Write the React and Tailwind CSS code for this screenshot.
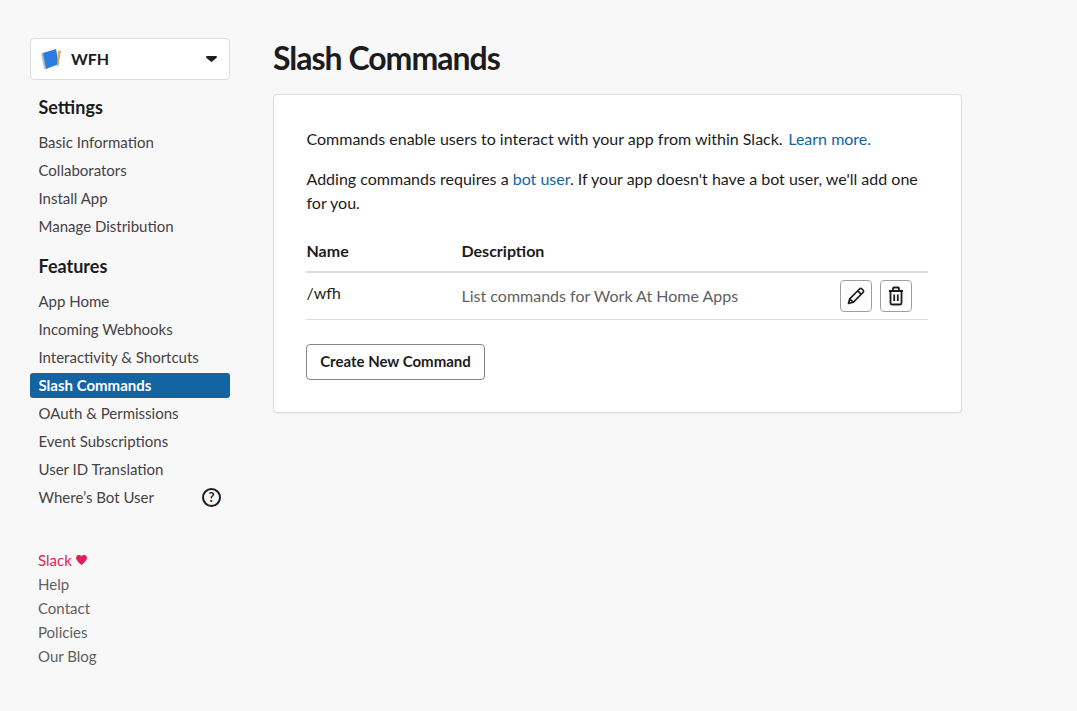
import React from "react";

const settings = ["Basic Information", "Collaborators", "Install App", "Manage Distribution"];
const features = ["App Home", "Incoming Webhooks", "Interactivity & Shortcuts", "Slash Commands", "OAuth & Permissions", "Event Subscriptions", "User ID Translation"];
const footer = ["Help", "Contact", "Policies", "Our Blog"];

function NavItem({ label, active }) {
  return (
    <a className={active ? "block h-[25px] rounded-[3px] bg-[#1264a3] pl-[8.5px] text-[15px] leading-[25px] font-bold text-white" : "block pl-[8.5px] text-[15px] leading-[25px] text-[#454245]"}>
      {label}
    </a>
  );
}

export default function App() {
  return (
    <div className="flex min-h-[711px] bg-[#f8f8f8] font-['Lato','Liberation_Sans',sans-serif] text-[#1d1c1d]">
      <aside className="ml-[30px] w-[200px] pt-[38px]">
        <div className="flex h-[42px] items-center rounded-[4px] border border-[#dddddd] bg-white pl-[9px] pr-[12px]">
          <svg width="23" height="23" viewBox="0 0 23 23" className="shrink-0">
            <path d="M1 5.500l3 15 2 1.500-2-17z" fill="#b9bec4" />
            <path d="M3 5l13-4 3 15-13 5z" fill="#2b7be0" />
            <path d="M18 3l3-.5-2.500 15-1.500 1.500z" fill="#e3ab4c" />
          </svg>
          <span className="ml-[8px] flex-1 text-[16px] font-bold">WFH</span>
          <svg width="11" height="6" viewBox="0 0 11 6" className="shrink-0"><path d="M1 0h9a1 1 0 0 1 .7 1.700L6.200 5.600a1 1 0 0 1-1.400 0L.3 1.700A1 1 0 0 1 1 0z" fill="#1d1c1d" /></svg>
        </div>
        <h2 className="mt-[13px] pl-[8.5px] text-[18px] leading-[28px] font-bold">Settings</h2>
        <nav className="mt-[9px] flex flex-col gap-[3px]">
          {settings.map((s) => <NavItem key={s} label={s} />)}
        </nav>
        <h2 className="mt-[13px] pl-[8.5px] text-[18px] leading-[28px] font-bold">Features</h2>
        <nav className="mt-[9px] flex flex-col gap-[3px]">
          {features.map((s) => <NavItem key={s} label={s} active={s === "Slash Commands"} />)}
          <div className="flex items-center justify-between pr-[9px]">
            <NavItem label="Where’s Bot User" />
            <span className="flex h-[19px] w-[19px] items-center justify-center rounded-full border-2 border-[#1d1c1d] text-[13px] font-bold">?</span>
          </div>
        </nav>
        <div className="mt-[38px] pl-[8px] text-[15px] leading-[24px] text-[#616061]">
          <div className="flex items-center gap-[4px] text-[#e01e5a]">
            Slack
            <svg width="11" height="10" viewBox="0 0 24 22"><path d="M12 22C4 15 0 11 0 6.500A6.300 6.300 0 0 1 12 3.500 6.300 6.300 0 0 1 24 6.500C24 11 20 15 12 22z" fill="#e01e5a" /></svg>
          </div>
          {footer.map((f) => <div key={f}>{f}</div>)}
        </div>
      </aside>
      <main className="ml-[43px] w-[689px] pt-[37px]">
        <h1 className="text-[32px] leading-[42px] font-bold tracking-[-1px]">Slash Commands</h1>
        <section className="mt-[15px] h-[318.500px] rounded-[4px] border border-[#dddddd] bg-white pl-[32px] pr-[33px] pt-[32px] shadow-[0_1px_2px_rgba(0,0,0,0.05)]">
          <p className="pl-[0.5px] text-[16px] leading-[24px]">Commands enable users to interact with your app from within Slack. <a className="ml-[1.5px] text-[#1264a3]">Learn more.</a></p>
          <p className="mt-[16px] pl-[0.5px] text-[16px] leading-[24px]">Adding commands requires a <a className="text-[#1264a3]">bot user</a>. If your app doesn't have a bot user, we'll add one for you.</p>
          <div className="mt-[19px] flex h-[39px] items-center border-b-2 border-[#dddddd] pb-[4px] pl-[0.5px] text-[16px] font-bold">
            <span className="w-[155px]">Name</span>
            <span>Description</span>
          </div>
          <div className="flex h-[47px] items-center border-b border-[#dddddd] pl-[0.5px] text-[16px]">
            <span className="w-[155px] -translate-y-[3px]">/wfh</span>
            <span className="flex-1 text-[#616061]">List commands for Work At Home Apps</span>
            <div className="mr-[16px] flex gap-[8px]">
              <button className="flex h-[32px] w-[32px] items-center justify-center rounded-[4px] border border-[#a0a0a0] bg-white">
                <svg width="18" height="18" viewBox="0 0 18 18" fill="none" stroke="#1d1c1d" strokeWidth="1.700" strokeLinejoin="round"><path d="M1.500 16.500l1.200-4.700L12.500 2a1.800 1.800 0 0 1 2.500 0l1 1a1.800 1.800 0 0 1 0 2.500l-9.800 9.800z" /><path d="M10.700 3.800l3.500 3.500" /><path d="M2.700 11.800l3.500 3.500" /></svg>
              </button>
              <button className="flex h-[32px] w-[32px] items-center justify-center rounded-[4px] border border-[#a0a0a0] bg-white">
                <svg width="18" height="20" viewBox="0 0 18 20" fill="none" stroke="#1d1c1d" strokeWidth="1.800"><path d="M2 5h14M6 5V2.500A1 1 0 0 1 7 1.500h4a1 1 0 0 1 1 1V5" /><path d="M3.500 5v12a1.500 1.500 0 0 0 1.500 1.500h8a1.500 1.500 0 0 0 1.500-1.500V5" /><path d="M7.200 8.500v6.500M10.800 8.500v6.500" /></svg>
              </button>
            </div>
          </div>
          <button className="mt-[24px] h-[36px] w-[179px] rounded-[4px] border border-[#868686] bg-white pb-[2px] text-[15px] font-bold">Create New Command</button>
        </section>
      </main>
    </div>
  );
}
